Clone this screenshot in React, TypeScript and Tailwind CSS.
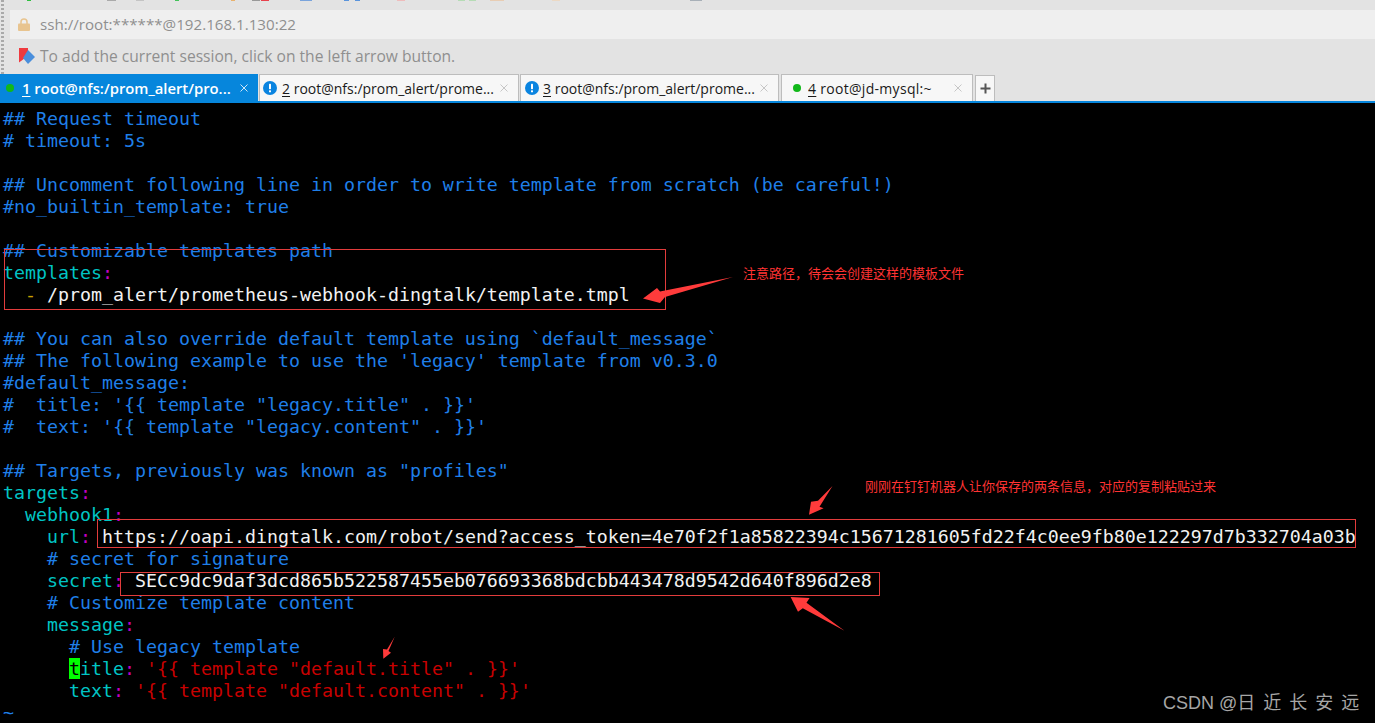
import React from "react";

const mono = "font-['DejaVu_Sans_Mono',monospace]";
const uiFont = "font-['Open_Sans','Noto_Sans',sans-serif]";

function C({ children }: { children: React.ReactNode }) {
  return <span className="text-[#1f7fe8]">{children}</span>;
}
function K({ children }: { children: React.ReactNode }) {
  return <span className="text-[#00c4c4]">{children}</span>;
}
function P() {
  return <span className="text-[#c000c0]">:</span>;
}
function S({ children }: { children: React.ReactNode }) {
  return <span className="text-[#c80000]">{children}</span>;
}
function W({ children }: { children: React.ReactNode }) {
  return <span className="text-[#f2f2f2]">{children}</span>;
}

const rows: React.ReactNode[] = [
  <C>## Request timeout</C>,
  <C># timeout: 5s</C>,
  "",
  <C>## Uncomment following line in order to write template from scratch (be careful!)</C>,
  <C>#no_builtin_template: true</C>,
  "",
  <C>## Customizable templates path</C>,
  <><K>templates</K><P /></>,
  <><span className="text-[#c8a000]">  - </span><W>/prom_alert/prometheus-webhook-dingtalk/template.tmpl</W></>,
  "",
  <C>## You can also override default template using `default_message`</C>,
  <C>## The following example to use the 'legacy' template from v0.3.0</C>,
  <C>#default_message:</C>,
  <C>#  title: '{"{{"} template "legacy.title" . {"}}"}'</C>,
  <C>#  text: '{"{{"} template "legacy.content" . {"}}"}'</C>,
  "",
  <C>## Targets, previously was known as "profiles"</C>,
  <><K>targets</K><P /></>,
  <><K>  webhook1</K><P /></>,
  <><K>    url</K><P /> <W>https://oapi.dingtalk.com/robot/send?access_token=4e70f2f1a85822394c15671281605fd22f4c0ee9fb80e122297d7b332704a03b</W></>,
  <C>    # secret for signature</C>,
  <><K>    secret</K><P /> <W>SECc9dc9daf3dcd865b522587455eb076693368bdcbb443478d9542d640f896d2e8</W></>,
  <C>    # Customize template content</C>,
  <><K>    message</K><P /></>,
  <C>      # Use legacy template</C>,
  <>{"      "}<span className="bg-[#00ff00] text-black">t</span><K>itle</K><P /> <S>'{"{{"} template "default.title" . {"}}"}'</S></>,
  <><K>      text</K><P /> <S>'{"{{"} template "default.content" . {"}}"}'</S></>,
  <C>~</C>,
];

function GreenDot({ margin }: { margin: string }) {
  return <span className={`block w-[8px] h-[8px] rounded-full bg-[#12b81a] shrink-0 ${margin}`} />;
}

function AlertIcon({ margin }: { margin: string }) {
  return (
    <svg width="14" height="14" viewBox="0 0 14 14" className={`shrink-0 ${margin}`}>
      <circle cx="7" cy="7" r="7" fill="#0a84e0" />
      <rect x="6" y="2.8" width="2" height="5.4" rx="0.6" fill="#fff" />
      <rect x="6" y="9.2" width="2" height="2" rx="0.5" fill="#fff" />
    </svg>
  );
}

function CloseX({ color }: { color: string }) {
  return (
    <svg width="8" height="8" viewBox="0 0 8 8" className="shrink-0 mr-[10px]">
      <path d="M0.5 0.5 L7.5 7.5 M7.5 0.5 L0.5 7.5" stroke={color} strokeWidth="1" fill="none" />
    </svg>
  );
}

function Tab({ num, title, icon, w, x, gap, extra }: { num: string; title: string; icon: React.ReactNode; w: string; x: string; gap: string; extra?: string }) {
  return (
    <div className={`${w} h-[27px] bg-[#f7f7f7] border border-b-0 border-[#bdbdbd] flex items-center shrink-0 text-[14px] text-[#1a1a1a] ${x}`}>
      {icon}
      <span className={`${gap} whitespace-pre flex-1 overflow-hidden ${extra ?? ""}`}>
        <span className="underline underline-offset-2">{num}</span> {title}
      </span>
      <CloseX color="#c6c6c6" />
    </div>
  );
}

function Annotations() {
  return (
    <svg width="1375" height="723" viewBox="0 0 1375 723" className="absolute left-0 top-0 pointer-events-none">
      <g fill="none" stroke="#e23c3c" strokeWidth="1">
        <rect x="4.5" y="249.5" width="661" height="60" />
        <rect x="97.5" y="519.5" width="1258" height="28" />
        <rect x="120.5" y="572.5" width="759" height="23" />
      </g>
      <g fill="#ff3b3b">
        <path d="M733 277 L660 291.5 L657 288 L643 298.5 L660 303 L665 297 Z" />
        <path d="M832.5 486 L818 500.7 L811 501.7 L809 514.7 L823.6 508.3 L819.5 506.7 Z" />
        <path d="M844.5 630.7 L806.5 602.7 L809.6 598 L790.6 597 L798 611.7 L802.8 608.3 Z" />
        <path d="M394.7 636.7 L387 649.5 L383 649 L383.3 658.7 L391 652.7 L388.5 651 Z" />
      </g>
    </svg>
  );
}

export default function App() {
  return (
    <div className={`relative w-[1375px] h-[723px] overflow-hidden bg-black flex flex-col ${uiFont}`}>
      <div className="h-[74px] bg-[#e3e3e3] flex shrink-0">
        <div className="w-[10px] shrink-0 flex">
          <div className="w-[3px] ml-[1px] h-full bg-[repeating-linear-gradient(to_bottom,#a9a9a9_0,#a9a9a9_2px,#e3e3e3_2px,#e3e3e3_4px)]" />
        </div>
        <div className="flex-1 flex flex-col">
          <svg width="1365" height="10" viewBox="10 0 1365 10" className="shrink-0">
            <g>
              <rect x="27" y="0" width="4" height="1" fill="#2fbf3f" />
              <rect x="107" y="0" width="9" height="1" fill="#aaaaaa" />
              <rect x="136" y="0" width="8" height="1" fill="#c4c4c4" />
              <rect x="175" y="0" width="4" height="1" fill="#42c25a" />
              <rect x="231" y="0" width="4" height="1" fill="#e9b26e" />
              <rect x="252" y="0" width="8" height="1" fill="#999999" />
              <rect x="261" y="0" width="8" height="1" fill="#e8414c" />
              <rect x="300" y="0" width="12" height="1" fill="#7aa4dc" />
              <rect x="344" y="0" width="5" height="1" fill="#5a94dc" />
              <rect x="355" y="0" width="5" height="1" fill="#5a94dc" />
              <rect x="397" y="0" width="8" height="1" fill="#efbcbc" />
              <rect x="458" y="0" width="7" height="1" fill="#b6dcb6" />
              <rect x="469" y="0" width="7" height="1" fill="#b6dcb6" />
              <rect x="490" y="0" width="14" height="1" fill="#e8cdb4" />
              <rect x="552" y="0" width="8" height="1" fill="#ecd9c4" />
              <rect x="690" y="0" width="12" height="1" fill="#a8b0b8" />
            </g>
          </svg>
          <div className="h-[29px] bg-[#efefef] flex items-center pl-[8px] shrink-0">
            <svg width="12" height="13" viewBox="0 0 12 13" className="shrink-0">
              <path d="M3 6 V4 a3 3 0 0 1 6 0 V6" fill="none" stroke="#e8c48f" strokeWidth="1.5" />
              <rect x="0" y="5.5" width="12" height="7.5" rx="1" fill="#e8c48f" />
            </svg>
            <span className="ml-[10px] text-[15.15px] text-[#8f8f8f]">ssh://root:******@192.168.1.130:22</span>
          </div>
          <div className="h-[35px] flex items-center pl-[8px]">
            <svg width="17" height="17" viewBox="0 0 17 17" className="shrink-0">
              <path d="M1 0 H10 V8 L3 13 L1 14.5 Z" fill="#ef3a3f" />
              <path d="M10 2 L17 9 L10 16 L5 10 Z" fill="#4a8fdc" />
            </svg>
            <span className="ml-[5px] text-[15.6px] text-[#8f8f8f]">To add the current session, click on the left arrow button.</span>
          </div>
        </div>
      </div>

      <div className="h-[27px] bg-[#e3e3e3] flex items-end shrink-0">
        <div className="w-[258px] h-[27px] pt-[1px] bg-[#0686dc] flex items-center shrink-0 text-[14.8px] font-semibold text-white pl-[6px]">
          <GreenDot margin="" />
          <span className="ml-[8px] flex-1 whitespace-pre">
            <span className="underline underline-offset-2">1</span> root@nfs:/prom_alert/pro...
          </span>
          <CloseX color="#cfe6f7" />
        </div>
        <Tab num="2" title="root@nfs:/prom_alert/prome..." icon={<AlertIcon margin="ml-[3px]" />} w="w-[260px]" x="ml-[1px]" gap="ml-[5px]" />
        <Tab num="3" title="root@nfs:/prom_alert/prome..." icon={<AlertIcon margin="ml-[4px]" />} w="w-[259px]" x="ml-[1px]" gap="ml-[4px]" />
        <Tab num="4" title="root@jd-mysql:~" icon={<GreenDot margin="ml-[11px]" />} w="w-[192px]" x="ml-[2px]" gap="ml-[7px]" extra="tracking-[0.3px]" />
        <div className="ml-[2px] w-[20px] h-[26px] bg-[#f7f7f7] border border-b-0 border-[#bdbdbd] flex items-center justify-center shrink-0">
          <svg width="11" height="11" viewBox="0 0 11 11">
            <path d="M5.5 0.5 V10.5 M0.5 5.5 H10.5" stroke="#555555" strokeWidth="2" fill="none" />
          </svg>
        </div>
      </div>
      <div className="h-[2px] bg-[#0686dc] shrink-0" />

      <div className={`flex-1 pl-[3px] pt-[5px] text-[18.27px] ${mono}`}>
        {rows.map((r, i) => (
          <div key={i} className="h-[22px] leading-[22px] whitespace-pre">{r}</div>
        ))}
      </div>

      <Annotations />

      <div className="absolute left-[743px] top-[265px] text-[13px] leading-[16px] text-[#ff3333] font-['Noto_Sans_CJK_SC',sans-serif] whitespace-pre">注意路径，待会会创建这样的模板文件</div>
      <div className="absolute left-[865px] top-[478px] text-[13px] leading-[16px] text-[#ff3333] font-['Noto_Sans_CJK_SC',sans-serif] whitespace-pre">刚刚在钉钉机器人让你保存的两条信息，对应的复制粘贴过来</div>
      <div className="absolute left-[1163px] top-[692px] text-[18px] leading-[22px] text-[#a6a6a6] font-['Liberation_Sans','Noto_Sans_CJK_SC',sans-serif] whitespace-pre">CSDN @<span className="[word-spacing:3px]">日 近 长 安 远</span></div>
    </div>
  );
}
